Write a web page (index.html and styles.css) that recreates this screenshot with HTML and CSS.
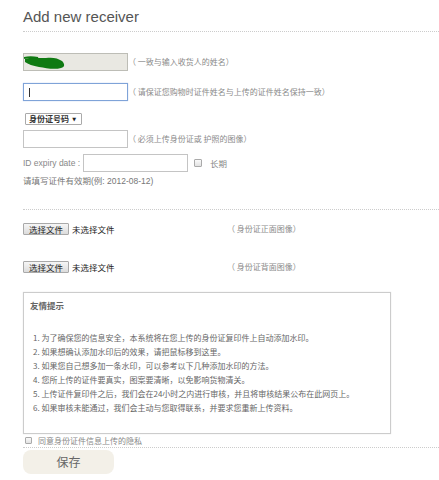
FILE: index.html
```html
<!DOCTYPE html>
<html lang="zh-CN">
<head>
<meta charset="utf-8">
<title>Add new receiver</title>
<link rel="stylesheet" href="styles.css">
</head>
<body>
<div class="page">
  <h2 class="title">Add new receiver</h2>
  <div class="form">
    <div class="row row-name">
      <div class="field field-filled">
        <svg class="scribble" width="44" height="16" viewBox="0 0 44 16"><path d="M1 4 C6 2 14 3 22 3 C28 2 34 3 38 6 C41 9 41 12 37 13 C30 15 22 13 15 12 C9 11 4 9 1 7 Z" fill="#0f7a12"/><path d="M0 3 C4 2 9 2 14 3" stroke="#0f7a12" stroke-width="2" fill="none"/></svg>
      </div>
      <span class="hint">（ 一致与输入收货人的姓名）</span>
    </div>
    <div class="row row-real">
      <div class="field field-focus"><span class="caret"></span></div>
      <span class="hint">（ 请保证您购物时证件姓名与上传的证件姓名保持一致）</span>
    </div>
    <div class="select" role="combobox" aria-label="证件类型">
      <span class="select-text">身份证号码</span>
      <span class="select-arrow">▼</span>
    </div>
    <div class="row row-id">
      <input class="field" type="text">
      <span class="hint">（ 必须上传身份证或 护照的图像）</span>
    </div>
    <div class="row row-expiry">
      <span class="label">ID expiry date :</span>
      <input class="field" type="text">
      <input class="check" type="checkbox">
      <span class="label check-label">长期</span>
    </div>
    <p class="note">请填写证件有效期(例: 2012-08-12)</p>
  </div>
  <div class="divider divider-mid"></div>
  <div class="file-row file-first">
    <button class="file-btn" type="button">选择文件</button>
    <span class="file-name">未选择文件</span>
    <span class="hint">（ 身份证正面图像）</span>
  </div>
  <div class="file-row file-second">
    <button class="file-btn" type="button">选择文件</button>
    <span class="file-name">未选择文件</span>
    <span class="hint">（ 身份证背面图像）</span>
  </div>
  <div class="tips">
    <div class="tips-title">友情提示</div>
    <ol class="tips-list">
      <li>1. 为了确保您的信息安全，本系统将在您上传的身份证复印件上自动添加水印。</li>
      <li>2. 如果想确认添加水印后的效果，请把鼠标移到这里。</li>
      <li>3. 如果您自己想多加一条水印，可以参考以下几种添加水印的方法。</li>
      <li>4. 您所上传的证件要真实，图案要清晰，以免影响货物清关。</li>
      <li>5. 上传证件复印件之后，我们会在24小时之内进行审核，并且将审核结果公布在此网页上。</li>
      <li>6. 如果审核未能通过，我们会主动与您取得联系，并要求您重新上传资料。</li>
    </ol>
  </div>
  <div class="agree">
    <input class="check check-small" type="checkbox">
    <span class="agree-text">同意身份证件信息上传的隐私</span>
  </div>
  <div class="divider divider-bottom"></div>
  <button class="save" type="button">保存</button>
</div>
</body>
</html>
```
FILE: styles.css
```css
html, body {
  margin: 0;
  padding: 0;
  background: #fff;
}
body {
  font-family: "Liberation Sans", "Noto Sans CJK SC", sans-serif;
  color: #777;
  width: 439px;
  height: 480px;
  overflow: hidden;
}
.page {
  padding-left: 23px;
}
.title {
  margin: 0;
  padding: 8px 0 5px;
  font-size: 15px;
  line-height: 18px;
  font-weight: normal;
  color: #555;
  border-bottom: 1px dotted #ccc;
}
.form {
  padding-top: 21px;
}
.row {
  display: flex;
  align-items: center;
}
.field {
  box-sizing: border-box;
  width: 105px;
  height: 18px;
  margin: 0;
  padding: 0;
  border: 1px solid #c4c4c4;
  background: #fff;
  position: relative;
  flex: none;
}
.field-filled {
  background: #e9e8e2;
  border-color: #bdbdb6;
}
.scribble {
  position: absolute;
  left: 0;
  top: 1px;
}
.field-focus {
  border-color: #7fa3d8;
  box-shadow: 0 0 1px #a9c3ea;
}
.caret {
  position: absolute;
  left: 5px;
  top: 4px;
  width: 1px;
  height: 9px;
  background: #333;
}
.hint {
  font-family: "Noto Sans CJK SC", "Liberation Sans", sans-serif;
  font-size: 8px;
  line-height: 10px;
  color: #8a8a8a;
  white-space: nowrap;
}
.row-name {
  margin-bottom: 12px;
}
.row-real {
  margin-bottom: 12px;
}
.select {
  display: flex;
  align-items: center;
  box-sizing: border-box;
  width: 57px;
  height: 12px;
  margin: 0 0 5px 2px;
  padding: 0 5px 0 3px;
  border: 1px solid #aaa;
  border-radius: 1px;
  background: #fff;
}
.select-text {
  flex: 1;
  font-family: "Noto Sans CJK SC", sans-serif;
  font-size: 8px;
  line-height: 10px;
  font-weight: bold;
  color: #333;
  white-space: nowrap;
}
.select-arrow {
  font-family: "DejaVu Sans", sans-serif;
  font-size: 5px;
  line-height: 8px;
  color: #222;
}
.row-id {
  margin-bottom: 6px;
}
.label {
  font-size: 8.5px;
  line-height: 10px;
  color: #888;
  white-space: nowrap;
}
.row-expiry .label:first-child {
  width: 60px;
}
.check {
  -webkit-appearance: none;
  appearance: none;
  box-sizing: border-box;
  width: 8px;
  height: 8px;
  margin: 0 0 0 6px;
  border: 1px solid #aaa;
  border-radius: 1px;
  background: linear-gradient(#fafafa, #e2e2e2);
}
.check-label {
  margin-left: 8px;
  font-family: "Noto Sans CJK SC", sans-serif;
}
.note {
  margin: 4px 0 0;
  font-family: "Liberation Sans", "Noto Sans CJK SC", sans-serif;
  font-size: 8.5px;
  line-height: 10px;
  color: #777;
}
.divider {
  border-top: 1px dotted #ccc;
}
.divider-mid {
  margin-top: 23px;
}
.file-row {
  display: flex;
  align-items: center;
}
.file-first {
  margin-top: 13px;
}
.file-second {
  margin-top: 26px;
}
.file-btn {
  box-sizing: border-box;
  width: 46px;
  height: 12px;
  margin: 0;
  padding: 0;
  border: 1px solid #a9a9a9;
  border-radius: 1px;
  background: linear-gradient(#f6f6f6, #dcdcdc);
  font-family: "Noto Sans CJK SC", sans-serif;
  font-size: 8.5px;
  line-height: 10px;
  color: #222;
}
.file-name {
  width: 155px;
  margin-left: 3px;
  font-family: "Noto Sans CJK SC", sans-serif;
  font-size: 8.5px;
  line-height: 10px;
  color: #222;
}
.tips {
  box-sizing: border-box;
  width: 368px;
  height: 142px;
  margin-top: 19px;
  padding: 7px 0 0 6px;
  border: 1px solid #ccc;
  box-shadow: 0 0 1px #ddd;
}
.tips-title {
  font-family: "Noto Sans CJK SC", sans-serif;
  font-size: 8.5px;
  line-height: 10px;
  font-weight: bold;
  color: #666;
}
.tips-list {
  list-style: none;
  margin: 21px 0 0;
  padding: 0 0 0 3px;
  font-family: "Noto Sans CJK SC", sans-serif;
  font-size: 8px;
  line-height: 14px;
  color: #666;
  white-space: nowrap;
}
.agree {
  display: flex;
  align-items: center;
  margin-top: 2px;
  height: 9px;
}
.check-small {
  width: 7px;
  height: 7px;
  margin-left: 2px;
}
.agree-text {
  margin-left: 6px;
  font-family: "Noto Sans CJK SC", sans-serif;
  font-size: 8px;
  line-height: 10px;
  color: #888;
}
.divider-bottom {
  margin-top: 2px;
}
.save {
  display: block;
  box-sizing: border-box;
  width: 91px;
  height: 24px;
  margin: 2px 0 0;
  padding: 0;
  border: none;
  border-radius: 8px;
  background: #f3f0e8;
  font-family: "Noto Sans CJK SC", sans-serif;
  font-size: 12px;
  line-height: 24px;
  color: #666;
}
```
